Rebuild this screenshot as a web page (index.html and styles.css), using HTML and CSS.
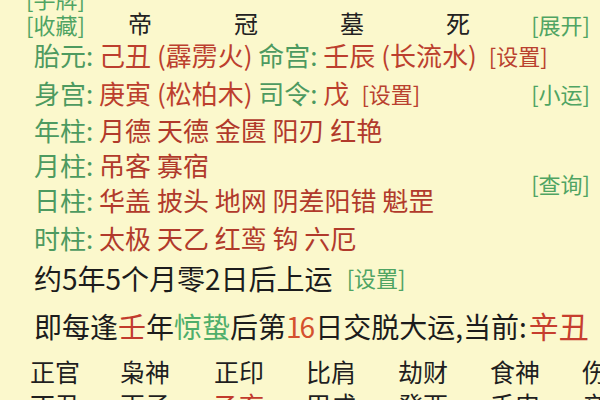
FILE: index.html
```html
<!DOCTYPE html>
<html lang="zh-CN">
<head>
<meta charset="utf-8">
<title>八字排盘</title>
<link rel="stylesheet" href="styles.css">
</head>
<body>
<div class="page">
  <div class="row r0"><span class="btn">[手牌]</span></div>

  <div class="row r1">
    <span class="btn btn-left">[收藏]</span>
    <div class="stages">
      <span>帝</span><span>冠</span><span>墓</span><span>死</span>
    </div>
    <span class="btn btn-right">[展开]</span>
  </div>

  <div class="row r2 info">
    <span class="line"><span class="lbl">胎元:</span> <span class="val">己丑 (霹雳火)</span> <span class="lbl">命宫:</span> <span class="val">壬辰 (长流水)</span></span>
    <span class="btn red gap10">[设置]</span>
  </div>

  <div class="row r3 info">
    <span class="line"><span class="lbl">身宫:</span> <span class="val">庚寅 (松柏木)</span> <span class="lbl">司令:</span> <span class="val">戊</span></span>
    <span class="btn red gap10">[设置]</span>
    <span class="btn btn-right">[小运]</span>
  </div>

  <div class="row r4 info">
    <span class="line"><span class="lbl">年柱:</span> <span class="sha">月德 天德 金匮 阳刃 红艳</span></span>
  </div>

  <div class="group">
    <div class="group-rows">
      <div class="row r5 info">
        <span class="line"><span class="lbl">月柱:</span> <span class="sha">吊客 寡宿</span></span>
      </div>
      <div class="row r6 info">
        <span class="line"><span class="lbl">日柱:</span> <span class="sha">华盖 披头 地网 阴差阳错 魁罡</span></span>
      </div>
    </div>
    <span class="btn btn-right">[查询]</span>
  </div>

  <div class="row r7 info">
    <span class="line"><span class="lbl">时柱:</span> <span class="sha">太极 天乙 红鸾 钩 六厄</span></span>
  </div>

  <div class="row r8 big">
    <span>约5年5个月零2日后上运</span>
    <span class="btn gap14">[设置]</span>
  </div>

  <div class="row r9 big">
    <span>即每逢<span class="red">壬</span>年<span class="grn">惊蛰</span>后第<span class="org">16</span>日交脱大运,当前:<span class="cur">辛丑</span></span>
  </div>

  <div class="row r10 gods">
    <span>正官</span><span>枭神</span><span>正印</span><span>比肩</span><span>劫财</span><span>食神</span><span>伤官</span>
  </div>

  <div class="row r11 gods">
    <span>丁丑</span><span>丙子</span><span class="red">乙亥</span><span>甲戌</span><span>癸酉</span><span>壬申</span><span>辛未</span>
  </div>
</div>
</body>
</html>
```

FILE: styles.css
```css
html, body {
  margin: 0;
  padding: 0;
  background: #fbf8cc;
  overflow: hidden;
}

body {
  width: 600px;
  height: 400px;
  font-family: "Noto Sans CJK SC", "Noto Sans", sans-serif;
  color: #1f1f1f;
}

.page {
  margin-top: -16px;
  display: flex;
  flex-direction: column;
}

.row {
  display: flex;
  align-items: center;
  white-space: pre;
}

.btn {
  font-size: 22px;
  line-height: 25px;
  color: #4fa463;
}

.btn.red { color: #b9412f; }

.btn-left { margin-left: 26px; }

.btn-right {
  margin-left: auto;
  margin-right: 10px;
}

.gap10 { margin-left: 12px; }
.gap14 { margin-left: 14px; }

.r0 { height: 28px; padding-left: 26px; }

.r1 { height: 25px; }

.stages {
  display: grid;
  grid-template-columns: repeat(4, 106px);
  margin-left: 2px;
  font-size: 24px;
  line-height: 25px;
  color: #222;
  margin-top: -4px;
}

.stages span { text-align: center; }

.info {
  font-size: 26px;
  line-height: 34px;
  padding-left: 34px;
}

.lbl { color: #4d9a60; }
.val { color: #bc3f2e; }
.sha { color: #b13a2b; }

.r2 { height: 36px; }
.r3 { height: 40px; }
.r4 { height: 34px; }
.r5 { height: 35px; }
.r6 { height: 36px; }
.r7 { height: 39px; }

.group {
  display: flex;
  align-items: center;
}

.group-rows {
  display: flex;
  flex-direction: column;
}

.group .btn-right { margin-top: 2px; }

.big {
  font-size: 28px;
  line-height: 38px;
  padding-left: 34px;
  color: #1c1c1c;
}

.r8 { height: 41px; }

.r9 {
  height: 45px;
  align-items: flex-start;
  line-height: 54px;
}

.red { color: #c23b2c; }
.grn { color: #4fae6a; }
.org { color: #d4512e; letter-spacing: -2px; margin-right: 2px; }

.cur {
  color: #c63e2e;
  font-size: 30px;
  margin-left: 2px;
}

.gods {
  font-size: 25px;
  padding-left: 30px;
  display: grid;
  grid-template-columns: 90px 94px 92px 92px 92px 92px 92px;
  color: #1f1f1f;
}

.r10 {
  height: 44px;
  margin-top: 6px;
  line-height: 44px;
}

.r11 {
  height: 22px;
  line-height: 22px;
}
```
